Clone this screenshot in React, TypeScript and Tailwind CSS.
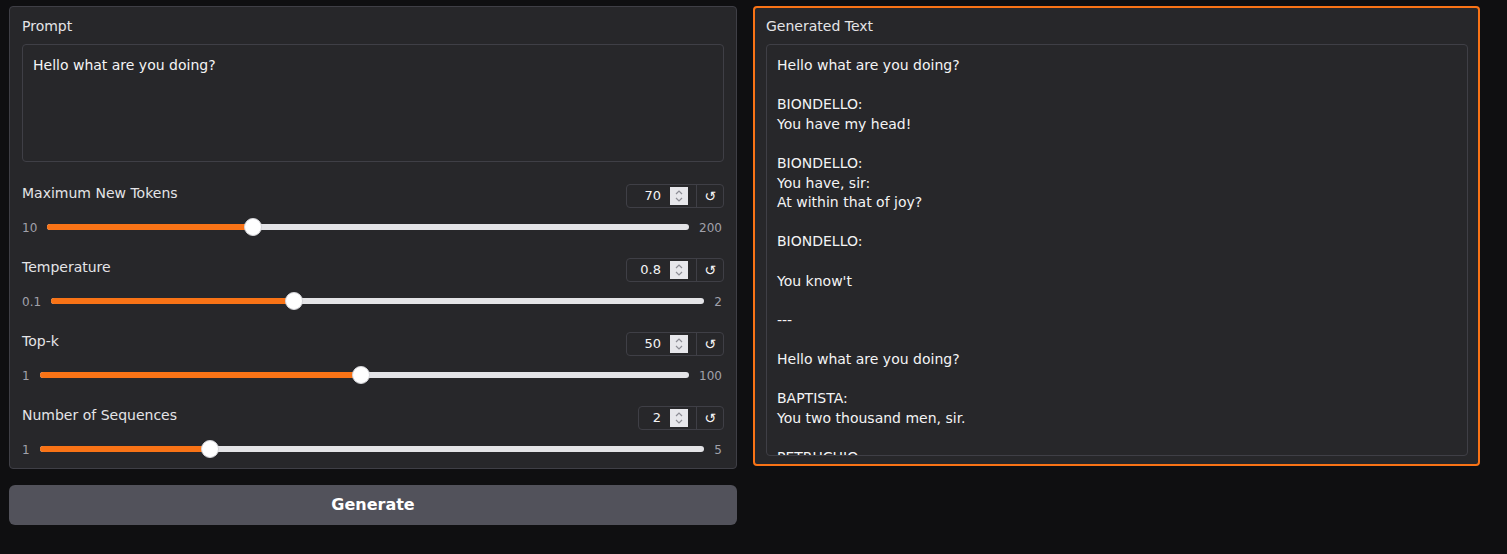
import React from 'react';

const FONT = { fontFamily: '"DejaVu Sans", "Noto Sans", sans-serif' };

interface SliderDef {
  label: string;
  value: string;
  num: number;
  min: number;
  max: number;
  minText: string;
  maxText: string;
  inputW: string;
}

const sliders: SliderDef[] = [
  { label: 'Maximum New Tokens', value: '70', num: 70, min: 10, max: 200, minText: '10', maxText: '200', inputW: 'w-[69px]' },
  { label: 'Temperature', value: '0.8', num: 0.8, min: 0.1, max: 2, minText: '0.1', maxText: '2', inputW: 'w-[69px]' },
  { label: 'Top-k', value: '50', num: 50, min: 1, max: 100, minText: '1', maxText: '100', inputW: 'w-[69px]' },
  { label: 'Number of Sequences', value: '2', num: 2, min: 1, max: 5, minText: '1', maxText: '5', inputW: 'w-[57px]' },
];

const generated = `Hello what are you doing?

BIONDELLO:
You have my head!

BIONDELLO:
You have, sir:
At within that of joy?

BIONDELLO:

You know't

---

Hello what are you doing?

BAPTISTA:
You two thousand men, sir.

PETRUCHIO:
I am not so much as you.`;

function Spinner() {
  return (
    <div className="w-[18px] h-[18px] bg-[#e7e7eb] flex flex-col items-center justify-center gap-[2px]">
      <svg width="8" height="5" viewBox="0 0 8 5" fill="none">
        <path d="M1 4 L4 1 L7 4" stroke="#8e8e96" strokeWidth="1.2" />
      </svg>
      <svg width="8" height="5" viewBox="0 0 8 5" fill="none">
        <path d="M1 1 L4 4 L7 1" stroke="#8e8e96" strokeWidth="1.2" />
      </svg>
    </div>
  );
}

function SliderBlock({ s, first }: { s: SliderDef; first: boolean }) {
  const frac = (s.num - s.min) / (s.max - s.min);
  const pos = `calc(9px + ${frac} * (100% - 18px))`;
  return (
    <div className={first ? 'mt-[22px]' : 'mt-[21px]'}>
      <div className="flex items-start justify-between h-[24px]">
        <span className="text-[14px] leading-[18px] text-[#e4e4e7]">{s.label}</span>
        <div className="flex h-[24px] border border-[#3f3f46] rounded-[4px]">
          <div className={`${s.inputW} flex items-center justify-end pr-[8px] gap-[9px]`}>
            <span className="text-[13px] text-[#f4f4f5]">{s.value}</span>
            <Spinner />
          </div>
          <div className="w-[27px] border-l border-[#3f3f46] flex items-center justify-center text-[14px] text-[#f4f4f5]">
            ↺
          </div>
        </div>
      </div>
      <div className="mt-[9px] h-[20px] flex items-center gap-[10px] pr-[2px]">
        <span className="text-[12px] leading-[20px] pt-px text-[#a1a1aa]">{s.minText}</span>
        <div className="relative flex-1 h-[6px] rounded-full bg-[#e4e4e7]">
          <div className="absolute left-0 top-0 h-full rounded-full bg-[#f97316]" style={{ width: pos }} />
          <div
            className="absolute top-1/2 w-[18px] h-[18px] -translate-x-1/2 -translate-y-1/2 rounded-full bg-white border border-[#d4d4d8]"
            style={{ left: pos }}
          />
        </div>
        <span className="text-[12px] leading-[20px] pt-px text-[#a1a1aa]">{s.maxText}</span>
      </div>
    </div>
  );
}

export default function App() {
  return (
    <div className="min-h-[554px] w-full bg-[#0f0f11] pt-[6px] pl-[9px]" style={FONT}>
      <div className="flex gap-[16px] items-start">
        {/* Left column */}
        <div className="w-[728px] flex flex-col gap-[16px]">
          <div className="bg-[#27272a] border border-[#3f3f46] rounded-[4px] px-[12px] pt-[10px] pb-[9px]">
            <div className="text-[14px] leading-[18px] text-[#e4e4e7] mb-[9px]">Prompt</div>
            <div className="h-[118px] border border-[#3f3f46] rounded-[4px] px-[10px] pt-[11px] text-[14px] leading-[19.6px] text-[#f4f4f5]">
              Hello what are you doing?
            </div>
            {sliders.map((s, i) => (
              <SliderBlock key={s.label} s={s} first={i === 0} />
            ))}
          </div>
          <button className="h-[40px] w-full rounded-[6px] bg-[#52525b] text-white text-[16px] font-bold">
            Generate
          </button>
        </div>

        {/* Right column */}
        <div className="w-[727px] bg-[#27272a] border-2 border-[#f97316] rounded-[4px] pl-[11px] pr-[10px] pt-[9px] pb-[8px]">
          <div className="text-[14px] leading-[18px] text-[#e4e4e7] mb-[9px]">Generated Text</div>
          <div className="h-[412px] overflow-hidden border border-[#3f3f46] rounded-[4px] px-[10px] pt-[11px] text-[14px] leading-[19.6px] text-[#f4f4f5] whitespace-pre-wrap">
            {generated}
          </div>
        </div>
      </div>
    </div>
  );
}
